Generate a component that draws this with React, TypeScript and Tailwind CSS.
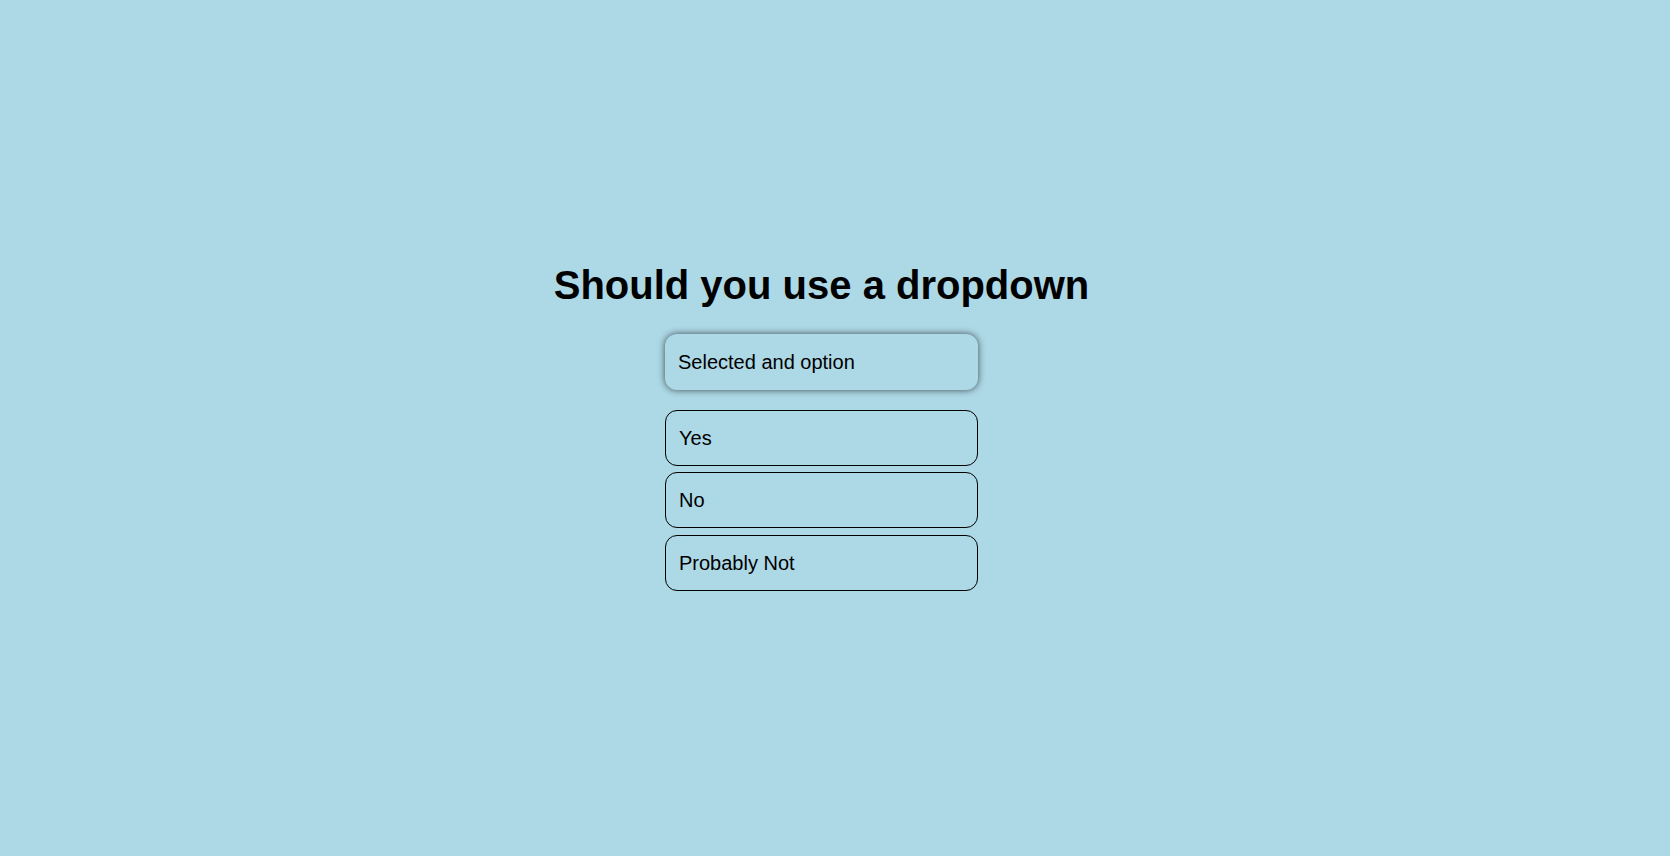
import React from "react";

export default function App() {
  const options = ["Yes", "No", "Probably Not"];
  return (
    <div
      className="min-h-screen w-full bg-[#add8e6] flex flex-col items-center justify-center pr-[27px] pb-[4px] text-black"
      style={{ fontFamily: '"Liberation Sans", Arial, sans-serif' }}
    >
      <h1 className="text-[40px] font-bold leading-[46px]">Should you use a dropdown</h1>
      <div className="mt-[26px] w-[313px] h-[56px] rounded-[12px] flex items-center pl-[13px] text-[20px] shadow-[0_0_7px_rgba(0,0,0,0.65)]">
        Selected and option
      </div>
      <div className="mt-[20px] flex flex-col gap-[6.5px]">
        {options.map((o) => (
          <div
            key={o}
            className="w-[313px] h-[56px] rounded-[12px] border border-black flex items-center pl-[13px] text-[20px]"
          >
            {o}
          </div>
        ))}
      </div>
    </div>
  );
}
